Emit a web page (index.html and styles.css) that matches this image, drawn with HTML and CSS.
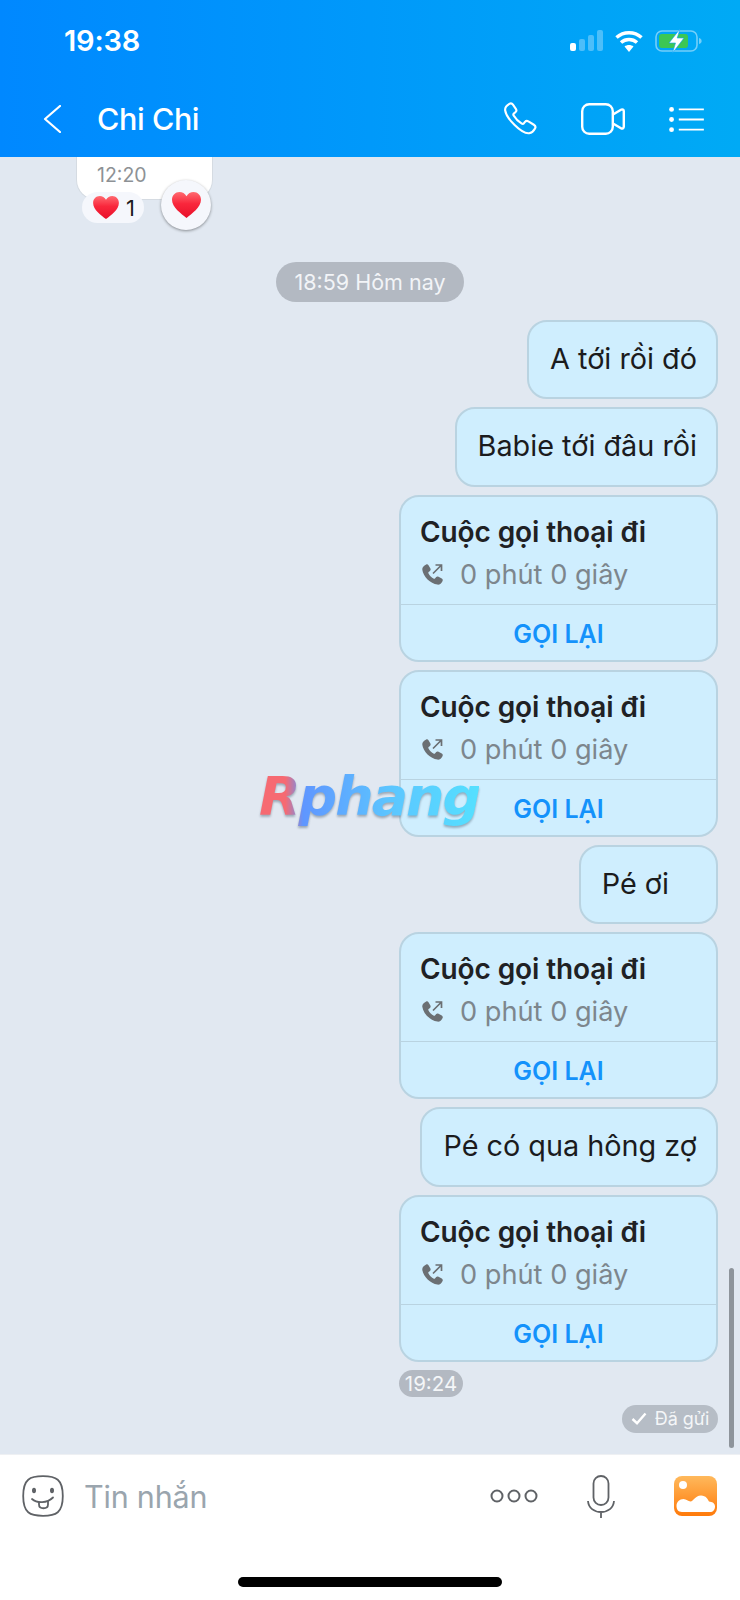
FILE: index.html
```html
<!DOCTYPE html>
<html lang="vi">
<head>
<meta charset="utf-8">
<title>Chi Chi</title>
<link rel="stylesheet" href="styles.css">
</head>
<body>
<svg class="defs" width="0" height="0" aria-hidden="true">
  <defs>
    <linearGradient id="heartFill" x1="0" y1="0" x2="0" y2="1"><stop offset="0" stop-color="#ff6a70"/><stop offset=".45" stop-color="#f9273c"/><stop offset="1" stop-color="#e8102a"/></linearGradient>
    <linearGradient id="photoFill" x1="0" y1="0" x2="0" y2="1"><stop offset="0" stop-color="#ffb95c"/><stop offset="1" stop-color="#ff7a0a"/></linearGradient>
    <symbol id="heart" viewBox="0 0 28 25"><path fill="url(#heartFill)" d="M14 25C9 21 0 15 0 7.500 0 3 3.300 0 7.200 0 10 0 12.600 1.500 14 4 15.400 1.500 18 0 20.800 0 24.700 0 28 3 28 7.500 28 15 19 21 14 25Z"/></symbol>
    <symbol id="outcall" viewBox="0 0 24 24"><path fill="#6b6f73" d="M6.200 1.500c.9-.4 1.800-.1 2.300.8l1.900 3.300c.4.800.3 1.700-.4 2.300L8.600 9.100c-.3.300-.4.700-.2 1.100 1.200 2.400 3.200 4.400 5.500 5.500.4.200.8.100 1.100-.2l1.200-1.400c.6-.7 1.500-.8 2.300-.4l3.300 1.900c.9.500 1.200 1.500.8 2.400-1.100 2.400-3 3.900-5.200 3.600C10.400 20.600 3.200 13.600 2.300 6.700 2 4.500 3.800 2.600 6.200 1.500Z"/><path fill="none" stroke="#6b6f73" stroke-width="1.700" d="M13 10.500 21.500 2M15.500 2h6v6"/></symbol>
  </defs>
</svg>

<div class="screen">
  <header class="header">
    <div class="status">
      <span class="clock">19:38</span>
      <div class="status-icons">
        <svg class="signal" viewBox="0 0 33 21" width="33" height="21"><rect x="0" y="13" width="6" height="8" rx="2" fill="#fff"/><rect x="9" y="9" width="6" height="12" rx="2" fill="#fff" opacity=".3"/><rect x="18" y="5" width="6" height="16" rx="2" fill="#fff" opacity=".3"/><rect x="27" y="0" width="6" height="21" rx="2" fill="#fff" opacity=".3"/></svg>
        <svg class="wifi" viewBox="0 0 28 22" width="28" height="22"><path d="M1.500 7.500C8.500 1 19.500 1 26.500 7.500" fill="none" stroke="#fff" stroke-width="3.500"/><path d="M6 12.500c4.500-4 11.500-4 16 0" fill="none" stroke="#fff" stroke-width="3.500"/><path d="M9.500 16.500c2.600-2 6.400-2 9 0L14 22Z" fill="#fff"/></svg>
        <svg class="battery" viewBox="0 0 47 24" width="47" height="24"><rect x="1" y="2" width="41" height="20" rx="6" fill="none" stroke="#fff" stroke-opacity=".45" stroke-width="1.600"/><rect x="4" y="5" width="29" height="14" rx="3" fill="#3cc755"/><path d="M44 9c2 .6 2.600 1.700 2.600 3S46 14.400 44 15Z" fill="#fff" opacity=".45"/><path d="M25 0 14 14h6.500L17.500 24 29 9h-6.800Z" fill="#fff" stroke="#0ba2f6" stroke-width=".6"/></svg>
      </div>
    </div>
    <nav class="nav">
      <svg class="back" viewBox="0 0 18 28" width="18" height="28"><path d="M17 1 2 14l15 13" fill="none" stroke="#fff" stroke-width="2.200" stroke-linecap="round" stroke-linejoin="round"/></svg>
      <h1 class="title">Chi Chi</h1>
      <div class="nav-actions">
        <svg class="phone" viewBox="0 0 36 34" width="35" height="34"><path d="M5.500 1.500c1.300-.8 2.800-.5 3.700.8l3 4.300c.8 1.200.6 2.600-.5 3.500l-1.400 1.100c-.7.600-.9 1.400-.4 2.200 2.100 3.500 4.800 6.200 8.400 8.300.8.500 1.600.3 2.200-.4l1.100-1.400c.9-1.100 2.300-1.300 3.500-.5l5.600 3.500c1.600 1 2 2.500 1.200 3.800-1.300 2.400-3.500 4.500-6 4.900C18 32.700 2.200 16 1.200 8.200.9 5.800 3 3 5.500 1.500Z" fill="none" stroke="#fff" stroke-width="2.200" stroke-linejoin="round"/></svg>
        <svg class="video" viewBox="0 0 44 32" width="44" height="32"><rect x="1.200" y="1.200" width="30.600" height="29.600" rx="7" fill="none" stroke="#fff" stroke-width="2.400"/><path d="M32 11.500 40 6.700c1.300-.8 2.800.1 2.800 1.500v15.600c0 1.400-1.500 2.300-2.800 1.500L32 20.500" fill="none" stroke="#fff" stroke-width="2.400" stroke-linejoin="round"/></svg>
        <svg class="menu" viewBox="0 0 36 28" width="35" height="27"><circle cx="2.500" cy="3.500" r="2.500" fill="#fff"/><circle cx="2.500" cy="14" r="2.500" fill="#fff"/><circle cx="2.500" cy="24.500" r="2.500" fill="#fff"/><path d="M10 3.500h26M10 14h26M10 24.500h26" stroke="#fff" stroke-width="2"/></svg>
      </div>
    </nav>
  </header>

  <main class="messages">
    <div class="old-bubble">
      <span class="old-time">12:20</span>
      <div class="reaction-count"><svg class="heart-sm"><use href="#heart"/></svg><span>1</span></div>
      <div class="reaction-btn"><svg class="heart-lg"><use href="#heart"/></svg></div>
    </div>

    <div class="day-pill">18:59 Hôm nay</div>

    <div class="thread">
      <div class="bubble">A tới rồi đó</div>
      <div class="bubble">Babie tới đâu rồi</div>
      <div class="card">
        <div class="card-body"><div class="card-title">Cuộc gọi thoại đi</div><div class="card-sub"><svg class="call-icon"><use href="#outcall"/></svg><span>0 phút 0 giây</span></div></div>
        <div class="card-action">GỌI LẠI</div>
      </div>
      <div class="card">
        <div class="card-body"><div class="card-title">Cuộc gọi thoại đi</div><div class="card-sub"><svg class="call-icon"><use href="#outcall"/></svg><span>0 phút 0 giây</span></div></div>
        <div class="card-action">GỌI LẠI</div>
      </div>
      <div class="bubble bubble-trailing">Pé ơi</div>
      <div class="card">
        <div class="card-body"><div class="card-title">Cuộc gọi thoại đi</div><div class="card-sub"><svg class="call-icon"><use href="#outcall"/></svg><span>0 phút 0 giây</span></div></div>
        <div class="card-action">GỌI LẠI</div>
      </div>
      <div class="bubble">Pé có qua hông zợ</div>
      <div class="last-group">
        <div class="card">
          <div class="card-body"><div class="card-title">Cuộc gọi thoại đi</div><div class="card-sub"><svg class="call-icon"><use href="#outcall"/></svg><span>0 phút 0 giây</span></div></div>
          <div class="card-action">GỌI LẠI</div>
        </div>
        <div class="time-pill">19:24</div>
      </div>
      <div class="sent-pill"><svg class="check" viewBox="0 0 16 13" width="16" height="13"><path d="M1.500 7 6 11.200 14.500 1.500" fill="none" stroke="#fff" stroke-width="2.400"/></svg><span>Đã gửi</span></div>
    </div>

    <div class="scrollbar"></div>
    <div class="watermark">Rphang</div>
  </main>

  <footer class="composer">
    <div class="composer-row">
      <svg class="smile" viewBox="0 0 42 42" width="42" height="42"><path d="M21 1.200c13 0 19.800 3 19.800 19.800S34 40.800 21 40.800 1.200 38 1.200 21 8 1.200 21 1.200Z" fill="none" stroke="#5f6266" stroke-width="1.800"/><ellipse cx="12" cy="15.500" rx="2" ry="2.800" fill="#5f6266"/><ellipse cx="30" cy="15.500" rx="2" ry="2.800" fill="#5f6266"/><path d="M10 24c5 4.500 15 4.500 21-1.500" fill="none" stroke="#5f6266" stroke-width="1.800" stroke-linecap="round"/><path d="M17 27v2.500c0 5 9 5 9 0V26" fill="none" stroke="#5f6266" stroke-width="1.800"/></svg>
      <span class="placeholder">Tin nhắn</span>
      <svg class="more" viewBox="0 0 48 14" width="48" height="14"><circle cx="7" cy="7" r="5.500" fill="none" stroke="#5f6266" stroke-width="2"/><circle cx="24" cy="7" r="5.500" fill="none" stroke="#5f6266" stroke-width="2"/><circle cx="41" cy="7" r="5.500" fill="none" stroke="#5f6266" stroke-width="2"/></svg>
      <svg class="mic" viewBox="0 0 28 43" width="28" height="43"><rect x="6.500" y="1" width="15" height="29" rx="7.500" fill="none" stroke="#5f6266" stroke-width="1.800"/><path d="M1 26c.5 7 6 11 13 11s12.500-4 13-11M14 37v6" fill="none" stroke="#5f6266" stroke-width="1.800"/></svg>
      <svg class="photo" viewBox="0 0 43 40" width="43" height="40"><rect width="43" height="40" rx="8" fill="url(#photoFill)"/><circle cx="9" cy="9" r="4" fill="#fff"/><path d="M8 36c-4 0-5.500-3-5.500-6 0-4 3-7 7-7 3 0 4.500 2.500 7 2.500 3 0 4.500-6 10.500-6 5 0 7 4 8 6 3 .3 6 1.500 6 5 0 3.500-2 5.500-5 5.500Z" fill="#fff"/></svg>
    </div>
    <div class="home-bar"></div>
  </footer>
</div>
</body>
</html>
```

FILE: styles.css
```css
* { box-sizing: border-box; }
html, body { margin: 0; padding: 0; }
body { font-family: Inter, "Noto Sans", "Liberation Sans", sans-serif; background: #e1e8f1; }
.defs { position: absolute; }
.screen { width: 740px; height: 1600px; display: flex; flex-direction: column; overflow: hidden; }

.header { height: 157px; flex: none; background: linear-gradient(90deg, #0088ff 0%, #00aaf5 100%); color: #fff; }
.status { height: 81px; display: flex; align-items: center; padding: 0 38px 0 64px; justify-content: space-between; }
.clock { font-size: 29px; font-weight: 600; line-height: 1; letter-spacing: -.2px; }
.status-icons { display: flex; align-items: center; gap: 12px; }
.nav { height: 76px; display: flex; align-items: center; padding: 0 36px 0 43px; }
.back { flex: none; }
.title { margin: 0 0 0 36px; font-size: 30.5px; font-weight: 500; letter-spacing: -.4px; line-height: 1; }
.nav-actions { margin-left: auto; display: flex; align-items: center; }
.phone { margin-right: 42px; }
.video { margin-right: 44px; }

.messages { flex: 1; position: relative; display: flex; flex-direction: column; min-height: 0; }
.old-bubble { position: relative; width: 137px; height: 43px; margin-left: 76px; background: #fff; border: 1px solid #d5dbe2; border-top: 0; border-radius: 0 0 20px 20px; padding: 7px 0 0 20px; }
.old-time { font-size: 19.5px; line-height: 22px; color: #8d9195; display: block; }
.reaction-count { position: absolute; left: 5px; top: 35px; width: 62px; height: 31px; border-radius: 16px; background: #f5f7fc; display: flex; align-items: center; padding-left: 11px; gap: 7px; font-size: 22px; color: #1c1c1e; }
.heart-sm { width: 26px; height: 23px; }
.reaction-btn { position: absolute; left: 84px; top: 23px; width: 50px; height: 50px; border-radius: 50%; background: #f5f7fc; box-shadow: 0 1px 3px rgba(0,0,0,.4); display: flex; align-items: center; justify-content: center; }
.heart-lg { width: 29px; height: 26px; }

.day-pill { align-self: center; width: 188px; height: 40px; margin: 62px 0 17.5px; border-radius: 20px; background: #b3b9c2; color: #f2f4f7; font-size: 21.5px; line-height: 40px; text-align: center; }

.thread { display: flex; flex-direction: column; align-items: flex-end; gap: 8px; padding-right: 22px; }
.bubble { height: 79.5px; padding: 0 19px 0 21px; border: 2px solid #b9d3e1; border-radius: 20px; background: #cfeefe; color: #1b1b1d; font-size: 28.8px; line-height: 73px; white-space: nowrap; }
.bubble-trailing { padding-right: 47px; }
.card { width: 319px; height: 167px; border: 2px solid #b9d3e1; border-radius: 20px; background: #cfeefe; display: flex; flex-direction: column; }
.card-body { height: 108px; padding: 16px 0 0 19px; border-bottom: 1px solid #b9d3e1; flex: none; }
.card-title { font-size: 28px; font-weight: 600; line-height: 38px; color: #1f2124; letter-spacing: -.1px; }
.card-sub { display: flex; align-items: center; gap: 16px; font-size: 27.2px; line-height: 40px; color: #7d868d; margin-top: 4px; }
.call-icon { width: 24px; height: 24px; flex: none; }
.card-action { flex: 1; text-align: center; font-size: 25px; font-weight: 600; line-height: 58px; color: #1492fb; }

.last-group { display: flex; flex-direction: column; align-items: flex-start; gap: 8px; }
.time-pill { height: 27px; width: 64px; border-radius: 14px; background: #b3b9c2; color: #f4f6f8; font-size: 20.5px; line-height: 27px; text-align: center; }
.sent-pill { height: 28px; width: 96px; border-radius: 14px; background: #b6bdc6; color: #f4f6f8; font-size: 18px; display: flex; align-items: center; justify-content: center; gap: 8px; }

.scrollbar { position: absolute; left: 729px; top: 1111px; width: 5px; height: 180px; border-radius: 3px; background: #8e949b; }
.watermark { position: absolute; left: 259px; top: 605px; font-family: "DejaVu Sans", sans-serif; font-size: 54px; font-weight: 700; font-style: italic; letter-spacing: -2px; line-height: 70px; background: linear-gradient(90deg, #f66a72 0%, #f66a72 12%, #5f96ff 20%, #5cc6ff 60%, #55e0ff 100%); -webkit-background-clip: text; background-clip: text; color: transparent; filter: drop-shadow(0 2px 1px rgba(70,90,110,.45)); }

.composer { height: 146px; flex: none; background: #fff; border-top: 1px solid #eef0f3; display: flex; flex-direction: column; }
.composer-row { display: flex; align-items: center; height: 82px; padding: 0 23px 0 22px; }
.smile { flex: none; }
.placeholder { margin-left: 20px; font-size: 30.5px; color: #9aa5ae; letter-spacing: -.2px; }
.more { margin-left: auto; }
.mic { margin-left: 49px; }
.photo { margin-left: 59px; }
.home-bar { width: 264px; height: 10px; margin: 40px 0 0 238px; border-radius: 5px; background: #000; }
```
